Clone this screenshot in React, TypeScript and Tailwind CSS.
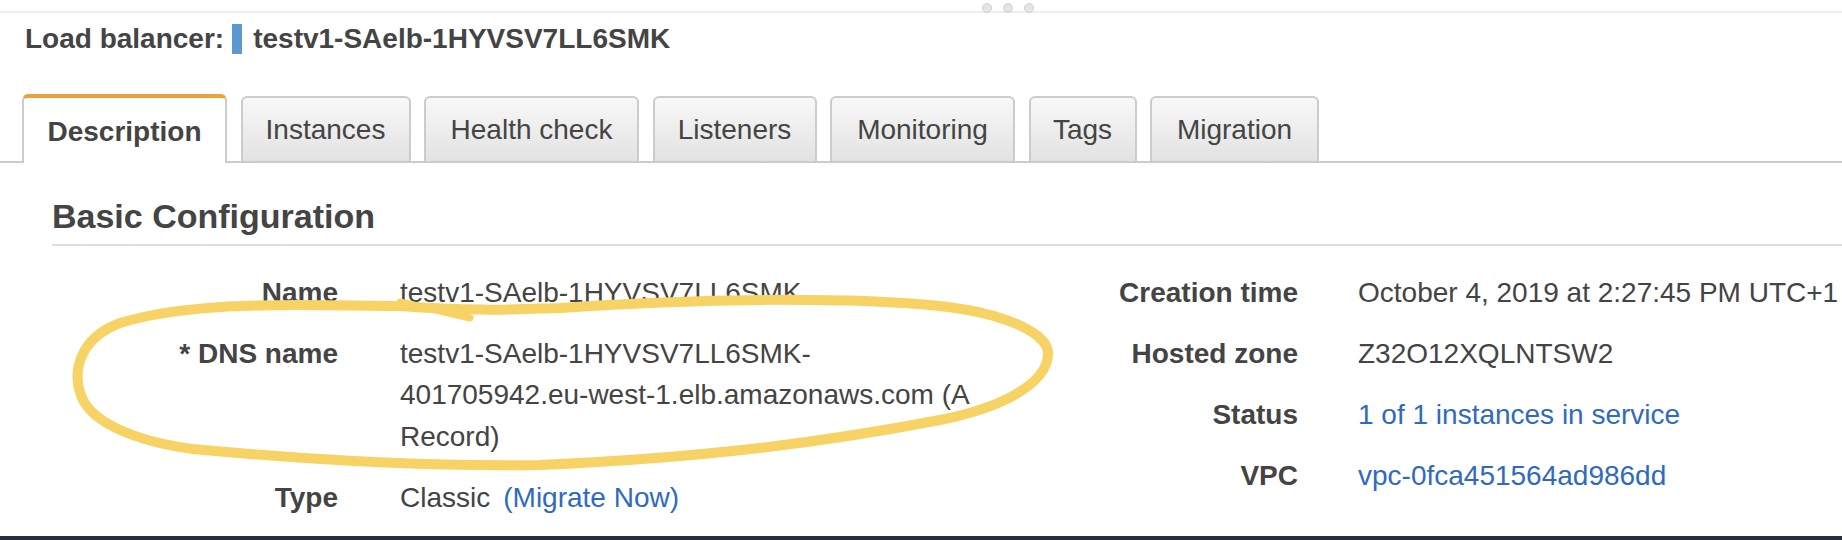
import React from "react";

const tabs = [
  { label: "Description", w: "w-[205px]", active: true },
  { label: "Instances", w: "w-[170px]", active: false },
  { label: "Health check", w: "w-[215px]", active: false },
  { label: "Listeners", w: "w-[164px]", active: false },
  { label: "Monitoring", w: "w-[185px]", active: false },
  { label: "Tags", w: "w-[108px]", active: false },
  { label: "Migration", w: "w-[169px]", active: false },
];

function Label({ children }: { children: React.ReactNode }) {
  return (
    <div className="text-right font-bold py-[9.75px] leading-[41.5px] whitespace-nowrap">
      {children}
    </div>
  );
}

function Value({ children }: { children: React.ReactNode }) {
  return <div className="py-[9.75px] leading-[41.5px]">{children}</div>;
}

export default function App() {
  return (
    <div className="relative w-[1842px] h-[540px] overflow-hidden bg-white flex flex-col font-['Liberation_Sans',Arial,sans-serif] text-[#444]">
      <div className="flex-1 flex flex-col overflow-hidden">
        {/* top resize line */}
        <div className="relative h-[13px] border-b-2 border-[#eeeeee] shrink-0">
          <div className="absolute left-[982px] top-[3px] flex gap-[11px]">
            <span className="block w-[10px] h-[10px] rounded-full bg-[#e4e4e4] border border-[#d0d0d0]" />
            <span className="block w-[10px] h-[10px] rounded-full bg-[#e4e4e4] border border-[#d0d0d0]" />
            <span className="block w-[10px] h-[10px] rounded-full bg-[#e4e4e4] border border-[#d0d0d0]" />
          </div>
        </div>

        {/* header */}
        <div className="mt-[10px] h-[32px] flex items-center pl-[25px] text-[28px] font-bold shrink-0">
          <span>Load balancer:</span>
          <span className="ml-[8px] block w-[10px] h-[30px] bg-[#5e98d2]" />
          <span className="ml-[11px]">testv1-SAelb-1HYVSV7LL6SMK</span>
        </div>

        {/* tabs */}
        <div className="mt-[39px] flex items-end gap-[13.5px] pl-[22px] border-b-2 border-[#cccccc] h-[69px] shrink-0">
          {tabs.map((t) =>
            t.active ? (
              <div
                key={t.label}
                className={`${t.w} h-[69px] -mb-[2px] bg-white border-2 border-b-0 border-[#cccccc] border-t-4 border-t-[#f0a03a] rounded-t-[6px] flex items-center justify-center text-[28px] font-bold pt-[2px]`}
              >
                {t.label}
              </div>
            ) : (
              <div
                key={t.label}
                className={`${t.w} h-[67px] -mb-[2px] bg-linear-to-b from-[#f8f8f8] to-[#e2e2e2] border-2 border-[#cccccc] rounded-t-[6px] flex items-center justify-center text-[28px]`}
              >
                {t.label}
              </div>
            )
          )}
        </div>

        {/* section */}
        <div className="pl-[52px] shrink-0">
          <div className="mt-[33px] text-[34px] font-bold leading-[40px] pb-[8px] border-b-2 border-[#dddddd]">
            Basic Configuration
          </div>

          <div className="mt-[16px] flex text-[28px]">
            <div className="grid grid-cols-[286px_585px] gap-x-[62px] content-start">
              <Label>Name</Label>
              <Value>testv1-SAelb-1HYVSV7LL6SMK</Value>
              <Label>* DNS name</Label>
              <Value>
                testv1-SAelb-1HYVSV7LL6SMK-
                <br />
                401705942.eu-west-1.elb.amazonaws.com (A
                <br />
                Record)
              </Value>
              <Label>Type</Label>
              <Value>
                Classic
                <span className="ml-[13px] text-[#2f6abe]">(Migrate Now)</span>
              </Value>
            </div>
            <div className="grid grid-cols-[313px_auto] gap-x-[60px] content-start">
              <Label>Creation time</Label>
              <Value>
                <span className="whitespace-nowrap">October 4, 2019 at 2:27:45 PM UTC+1</span>
              </Value>
              <Label>Hosted zone</Label>
              <Value>Z32O12XQLNTSW2</Value>
              <Label>Status</Label>
              <Value>
                <span className="text-[#2f6abe] whitespace-nowrap">1 of 1 instances in service</span>
              </Value>
              <Label>VPC</Label>
              <Value>
                <span className="text-[#2f6abe]">vpc-0fca451564ad986dd</span>
              </Value>
            </div>
          </div>
        </div>
      </div>

      {/* footer bar */}
      <div className="h-[4px] bg-[#232f3e] shrink-0" />

      {/* yellow freehand annotation */}
      <svg
        className="absolute left-0 top-0 pointer-events-none"
        width="1842"
        height="540"
        viewBox="0 0 1842 540"
      >
        <path
          d="M 400 306 C 480 312 520 309 560 308 C 700 298 850 297 940 306 C 1010 314 1050 335 1048 355 C 1046 385 1000 408 940 420 C 820 443 700 458 540 465 C 420 467 290 458 193 449 C 140 442 96 425 83 400 C 70 372 80 338 120 323 C 170 308 230 305 300 305 C 340 305 370 306 400 306"
          fill="none"
          stroke="#f6d364"
          strokeWidth="10"
          strokeLinecap="round"
          strokeLinejoin="round"
        />
        <path
          d="M 400 302 Q 432 309 470 318"
          fill="none"
          stroke="#f6d364"
          strokeWidth="7"
          strokeLinecap="round"
        />
      </svg>
    </div>
  );
}
